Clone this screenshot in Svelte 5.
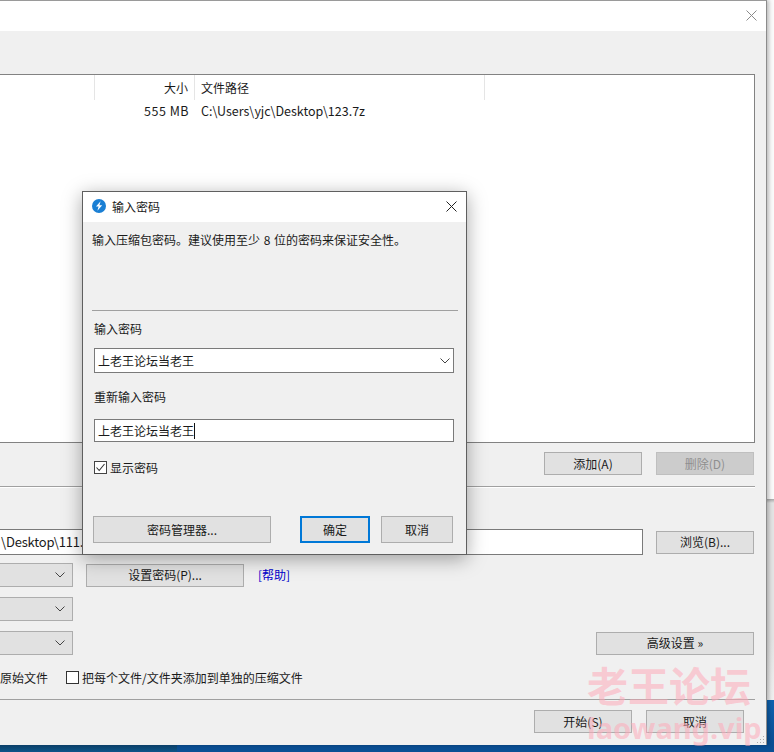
<script>
  const comboRows = [0, 1, 2];
</script>

<div class="stage">
  <div class="window">
    <div class="titlebar">
      <svg class="close" viewBox="0 0 11 11" width="11" height="11"><path d="M0.5 0.5L10.5 10.5M10.5 0.5L0.5 10.5" stroke="#8a8a8a" stroke-width="1" fill="none" /></svg>
    </div>
    <div class="panel">
      <div class="list">
        <div class="list-head">
          <div class="col col-name"></div>
          <div class="col col-size">大小</div>
          <div class="col col-path">文件路径</div>
        </div>
        <div class="list-row">
          <div class="cell-size">555 MB</div>
          <div class="cell-path">C:\Users\yjc\Desktop\123.7z</div>
        </div>
      </div>

      <div class="add-row">
        <button class="btn wide">添加(A)</button>
        <button class="btn wide disabled">删除(D)</button>
      </div>
      <div class="sep"></div>

      <div class="path-row">
        <div class="path-input">\Desktop\111.7z</div>
        <button class="btn wide">浏览(B)...</button>
      </div>

      <div class="options">
        {#each comboRows as row}
          <div class="option-row">
            <div class="combo">
              <svg viewBox="0 0 10 6" width="10" height="6"><path d="M0.5 0.5L5 5L9.5 0.5" stroke="#444" fill="none" /></svg>
            </div>
            {#if row === 0}
              <button class="btn set-pass">设置密码(P)...</button>
              <span class="help">[帮助]</span>
            {/if}
            {#if row === 2}
              <button class="btn advanced">高级设置 »</button>
            {/if}
          </div>
        {/each}
      </div>

      <div class="check-row">
        <span class="check-label">原始文件</span>
        <span class="box"></span>
        <span class="check-label">把每个文件/文件夹添加到单独的压缩文件</span>
      </div>

      <div class="sep-bottom"></div>

      <div class="action-row">
        <button class="btn wide">开始(S)</button>
        <button class="btn wide">取消</button>
      </div>
    </div>
    <div class="grip"></div>
  </div>

  <div class="task-item"></div>

  <div class="dialog">
    <div class="dialog-title">
      <svg class="app-icon" viewBox="0 0 14 14" width="14" height="14">
        <circle cx="7" cy="7" r="7" fill="#1a7fd4" />
        <path d="M8.6 2.2L4 7.6H6.6L5.4 11.8L10.2 6.2H7.4Z" fill="#fff" />
      </svg>
      <span>输入密码</span>
      <svg class="dialog-close" viewBox="0 0 11 11" width="11" height="11"><path d="M0.5 0.5L10.5 10.5M10.5 0.5L0.5 10.5" stroke="#222" fill="none" /></svg>
    </div>
    <div class="dialog-body">
      <p class="hint">输入压缩包密码。建议使用至少 8 位的密码来保证安全性。</p>
      <div class="dialog-sep"></div>
      <div class="field-label first">输入密码</div>
      <div class="field combo-field">
        <span>上老王论坛当老王</span>
        <svg viewBox="0 0 10 6" width="10" height="6"><path d="M0.5 0.5L5 5L9.5 0.5" stroke="#444" fill="none" /></svg>
      </div>
      <div class="field-label second">重新输入密码</div>
      <div class="field text-field"><span>上老王论坛当老王</span><i class="caret"></i></div>
      <div class="show-row">
        <span class="box checked">
          <svg viewBox="0 0 13 13" width="13" height="13"><path d="M2.5 6.5L5.2 9.5L10.5 3" stroke="#333" stroke-width="1.1" fill="none" /></svg>
        </span>
        <span>显示密码</span>
      </div>
      <div class="dialog-actions">
        <button class="btn manager">密码管理器...</button>
        <button class="btn ok">确定</button>
        <button class="btn cancel">取消</button>
      </div>
    </div>
  </div>

  <div class="watermark">
    <div class="wm-cn">老王论坛</div>
    <div class="wm-en">laowang.vip</div>
  </div>
</div>

<style>
  :global(body) {
    margin: 0;
  }

  .stage {
    position: relative;
    width: 774px;
    height: 752px;
    overflow: hidden;
    font-family: "Noto Sans CJK SC", "Noto Sans", sans-serif;
    font-size: 12px;
    color: #1a1a1a;
    background: linear-gradient(to bottom, #fbfbfb 0, #fbfbfb 499px, #a8a8a8 499px, #e4e4e4 503px, #e4e4e4 640px, #f0f0f0 700px, #0f63b0 700px, #0a4f94 745px, #0a4f94 752px);
  }

  .window {
    position: relative;
    box-sizing: border-box;
    width: 767px;
    height: 745px;
    background: #f0f0f0;
    border-top: 1px solid #9a9a9a;
    border-right: 1px solid #8c8c8c;
    box-shadow: 2px 0 4px rgba(0, 0, 0, 0.25);
    display: flex;
    flex-direction: column;
  }

  .titlebar {
    height: 30px;
    flex: none;
    background: #fff;
    position: relative;
  }

  .close {
    position: absolute;
    right: 9px;
    top: 9px;
  }

  .panel {
    display: flex;
    flex-direction: column;
    padding-top: 43px;
    width: 755px;
  }

  .list {
    box-sizing: border-box;
    height: 369px;
    background: #fff;
    border: 1px solid #828282;
    border-left: none;
  }

  .list-head {
    display: flex;
    height: 25px;
    line-height: 25px;
  }

  .col {
    box-sizing: border-box;
    border-right: 1px solid #e5e5e5;
  }

  .col-name {
    width: 95px;
  }

  .col-size {
    width: 100px;
    text-align: right;
    padding-right: 6px;
  }

  .col-path {
    width: 290px;
    padding-left: 6px;
  }

  .list-row {
    display: flex;
    height: 21px;
    line-height: 21px;
    font-size: 12.5px;
  }

  .cell-size {
    box-sizing: border-box;
    width: 189px;
    text-align: right;
    letter-spacing: 0.5px;
  }

  .cell-path {
    margin-left: 12px;
  }

  .btn {
    box-sizing: border-box;
    height: 23px;
    padding: 0 0 1px;
    font: inherit;
    color: inherit;
    background: #e1e1e1;
    border: 1px solid #adadad;
  }

  .wide {
    width: 98px;
  }

  .disabled {
    background: #cccccc;
    border-color: #bfbfbf;
    color: #8f8f8f;
  }

  .add-row {
    display: flex;
    justify-content: flex-end;
    gap: 14px;
    margin-top: 9px;
    padding-right: 1px;
  }

  .sep {
    margin-top: 11px;
    height: 0;
    border-top: 1px solid #a0a0a0;
    border-bottom: 1px solid #fff;
  }

  .path-row {
    display: flex;
    align-items: center;
    margin-top: 41px;
    padding-right: 1px;
  }

  .path-input {
    box-sizing: border-box;
    width: 643px;
    height: 26px;
    margin-right: 13px;
    padding-left: 1px;
    background: #fff;
    border: 1px solid #7a7a7a;
    border-left: none;
    font-size: 13px;
    line-height: 24px;
    letter-spacing: -0.2px;
  }

  .options {
    display: flex;
    flex-direction: column;
    gap: 10px;
    margin-top: 8px;
  }

  .option-row {
    display: flex;
    align-items: center;
    height: 24px;
    padding-right: 1px;
  }

  .combo {
    box-sizing: border-box;
    width: 73px;
    height: 24px;
    background: #e1e1e1;
    border: 1px solid #adadad;
    border-left: none;
    display: flex;
    align-items: center;
    justify-content: flex-end;
    padding-right: 7px;
  }

  .set-pass {
    width: 158px;
    margin-left: 13px;
  }

  .help {
    margin-left: 14px;
    margin-top: -1px;
    color: #0000cc;
  }

  .advanced {
    width: 158px;
    margin-left: auto;
  }

  .check-row {
    display: flex;
    align-items: center;
    height: 13px;
    margin-top: 16px;
  }

  .check-label {
    line-height: 13px;
  }

  .box {
    box-sizing: border-box;
    width: 13px;
    height: 13px;
    flex: none;
    background: #fff;
    border: 1px solid #333;
    margin-left: 18px;
    margin-right: 3px;
    display: inline-flex;
  }

  .check-row .check-label:last-child {
    white-space: nowrap;
  }

  .sep-bottom {
    margin-top: 15px;
    border-top: 1px solid #a0a0a0;
  }

  .action-row {
    display: flex;
    justify-content: flex-end;
    gap: 14px;
    margin-top: 10px;
    padding-right: 11px;
  }

  .grip {
    position: absolute;
    right: 2px;
    bottom: 2px;
    width: 8px;
    height: 8px;
    background: radial-gradient(circle, #aaa 0.8px, transparent 1px) 0 0 / 3px 3px;
    clip-path: polygon(100% 0, 100% 100%, 0 100%);
  }

  .task-item {
    position: absolute;
    left: 0;
    top: 745px;
    width: 177px;
    height: 7px;
    background: linear-gradient(to bottom, #0b3f68, #0c5588);
  }

  .dialog {
    position: absolute;
    left: 82px;
    top: 191px;
    box-sizing: border-box;
    width: 385px;
    height: 364px;
    background: #f0f0f0;
    border: 1px solid #5f5f5f;
    box-shadow: 0 4px 18px rgba(0, 0, 0, 0.35);
    display: flex;
    flex-direction: column;
  }

  .dialog-title {
    flex: none;
    box-sizing: border-box;
    height: 30px;
    padding-bottom: 2px;
    background: #fff;
    display: flex;
    align-items: center;
    padding-left: 9px;
    position: relative;
  }

  .app-icon {
    margin-right: 6px;
  }

  .dialog-close {
    position: absolute;
    right: 9px;
    top: 9px;
  }

  .dialog-body {
    display: flex;
    flex-direction: column;
    padding: 0 11px 0 11px;
  }

  .hint {
    margin: 0;
    padding-top: 9px;
    height: 17px;
    line-height: 17px;
    margin-left: -2px;
    word-spacing: 1px;
  }

  .dialog-sep {
    margin-top: 62px;
    margin-left: -2px;
    margin-right: -3px;
    border-top: 1px solid #a0a0a0;
  }

  .field-label {
    line-height: 16px;
  }

  .field-label.first {
    margin-top: 10px;
  }

  .field-label.second {
    margin-top: 16px;
  }

  .field {
    box-sizing: border-box;
    width: 360px;
    background: #fff;
    border: 1px solid #7a7a7a;
    display: flex;
    align-items: center;
    padding-left: 3px;
  }

  .combo-field {
    height: 25px;
    margin-top: 11px;
    justify-content: space-between;
    padding-right: 3px;
  }

  .text-field {
    height: 23px;
    margin-top: 14px;
  }

  .caret {
    width: 1px;
    height: 16px;
    background: #111;
  }

  .show-row {
    display: flex;
    align-items: center;
    margin-top: 19px;
    line-height: 13px;
  }

  .show-row .box {
    margin-left: 0;
    border-color: #444;
  }

  .box.checked svg {
    margin: -1px;
  }

  .dialog-actions {
    display: flex;
    margin-top: 42px;
    margin-left: -1px;
  }

  .dialog-actions .btn {
    height: 27px;
  }

  .manager {
    width: 178px;
  }

  .ok {
    width: 70px;
    margin-left: 29px;
    border: 2px solid #0078d7 !important;
  }

  .cancel {
    width: 72px;
    margin-left: 11px;
  }

  .watermark {
    position: absolute;
    left: 587px;
    top: 660px;
    width: 170px;
    pointer-events: none;
    color: rgba(255, 170, 185, 0.55);
    font-weight: 700;
  }

  .wm-cn {
    font-size: 41px;
    line-height: 48px;
    white-space: nowrap;
  }

  .wm-en {
    font-family: "Noto Sans", sans-serif;
    font-size: 29px;
    line-height: 40px;
    white-space: nowrap;
  }
</style>
